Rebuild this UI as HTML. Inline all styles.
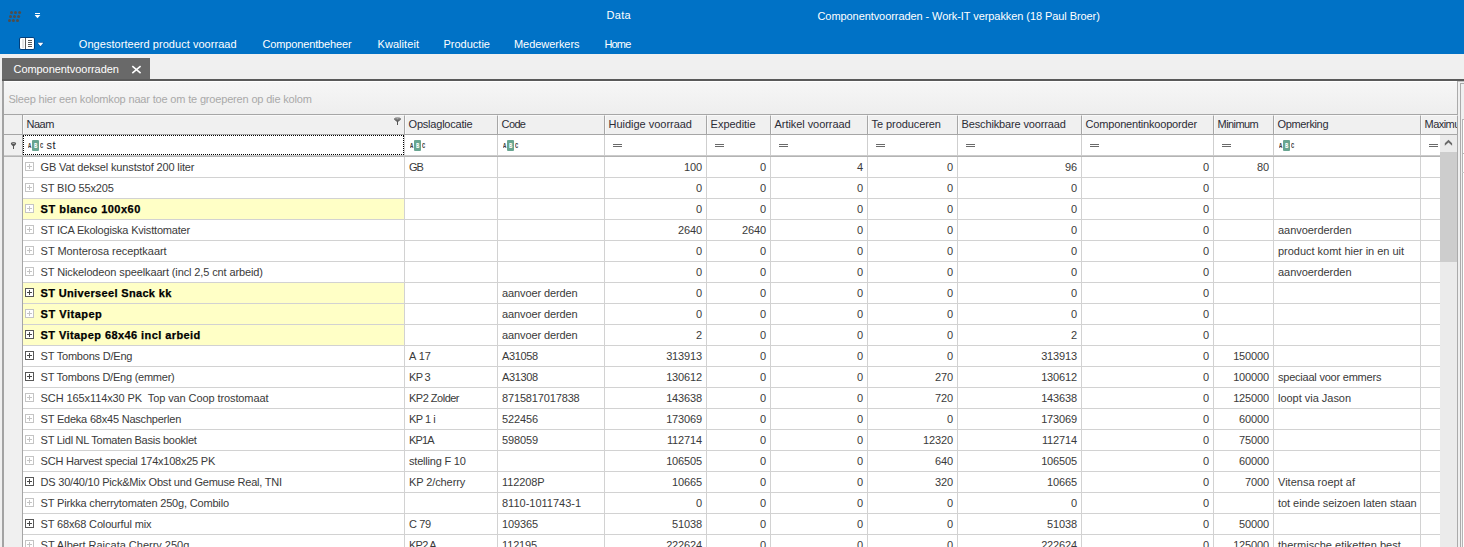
<!DOCTYPE html>
<html lang="nl"><head><meta charset="utf-8"><title>Componentvoorraden - Work-IT verpakken</title>
<style>
*{box-sizing:border-box;margin:0;padding:0}
html,body{width:1464px;height:547px;overflow:hidden}
body{position:relative;background:#f0f0f0;font-family:"Liberation Sans",Arial,sans-serif;font-size:11px;line-height:13px;color:#3a3a3a;letter-spacing:-0.14px}
.abs{position:absolute}
#bar{position:absolute;left:0;top:0;width:1464px;height:54px;background:#0072c6}
.wt{position:absolute;color:#fff;white-space:pre;height:13px}
#tab{position:absolute;left:2px;top:58px;width:148px;height:22px;background:#696969}
#tabline{position:absolute;left:2px;top:79px;width:1462px;height:2px;background:#5a5a5a}
#tabline2{position:absolute;left:4px;top:81px;width:1460px;height:1px;background:#c4c4c4}
#panel{position:absolute;left:2px;top:81px;width:1456px;height:470px;border-left:2px solid #a3a3a3;border-right:1px solid #ababab;background:#fff}
#group{position:absolute;left:4px;top:82px;width:1453px;height:32px;background:linear-gradient(#f6f6f6,#eeeeee)}
#gtext{position:absolute;left:8.4px;top:93px;color:#a9a9a9;white-space:pre}
#hdr{position:absolute;left:4px;top:114px;width:1453px;height:21px;background:#f0f0f0;border-top:1px solid #a6a6a6;border-bottom:1px solid #a6a6a6}
.hc{position:absolute;top:115px;height:19px;border-right:1px solid #a6a6a6;border-top:1px solid #f9f9f9;border-left:1px solid #f9f9f9;color:#2c2c36;white-space:pre;overflow:hidden;padding:2px 0 0 2.6px}
#ind{position:absolute;left:4px;top:135px;width:18px;height:420px;background:#f0f0f0}
#indb{position:absolute;left:22px;top:115px;width:1px;height:440px;background:#a6a6a6}
#frow{position:absolute;left:23px;top:135px;width:1417px;height:21px;background:#fff}
#fline{position:absolute;left:4px;top:155px;width:1436px;height:2px;background:linear-gradient(#d6d6d6,#a8a8a8)}
.fc{position:absolute;top:135px;height:20px;border-right:1px solid #cfcfcf}
.row{position:absolute;left:23px;width:1417px;height:21px;border-bottom:1px solid #d2d2d2;background:#fff}
.c{position:absolute;top:0;height:20px;border-right:1px solid #d2d2d2;white-space:pre;overflow:hidden;padding-top:4px}
.l{padding-left:4px}
.r{text-align:right;padding-right:4px}
.y{background:#ffffc6;font-weight:bold;color:#000;letter-spacing:-0.05px;-webkit-text-stroke:.25px #000}
.ex{position:absolute;left:2px;top:5px;width:9px;height:9px;border:1px solid #c4c4c4;background:#fff}
.ex:before{content:"";position:absolute;left:1px;top:3px;width:5px;height:1px;background:#c4c4c4}
.ex:after{content:"";position:absolute;left:3px;top:1px;width:1px;height:5px;background:#c4c4c4}
.ex.d{border-color:#585858}
.ex.d:before,.ex.d:after{background:#484848}
.nm{padding-left:17.6px}
.eq{position:absolute;top:9px;width:9px;height:3px;border-top:1px solid #6a6a6a;border-bottom:1px solid #6a6a6a}
.abc{position:absolute;top:5px;height:11px;width:16px}
.abc i{position:absolute;top:3px;font-style:normal;font-family:"Liberation Mono",monospace;font-weight:bold;font-size:7px;line-height:7px;letter-spacing:0;color:#3c3c3c;transform:scaleX(.78);transform-origin:0 0}
.abc b{position:absolute;left:4px;top:0;width:7px;height:11px;background:#68a591;border-radius:1px}
.abc b i{left:2px;color:#fff}
#sb{position:absolute;left:1440px;top:135px;width:17px;height:420px;background:#ebebeb}
#sbth{position:absolute;left:1440px;top:152px;width:17px;height:110px;background:#cdcdcd}
</style></head>
<body>
<div id="bar"></div>
<svg class="abs" style="left:0;top:0" width="60" height="54" viewBox="0 0 60 54"><g fill="#514d4a"><circle cx="11.5" cy="12.5" r="1.5"/><circle cx="15.5" cy="12.5" r="1.5"/><circle cx="19.6" cy="12.5" r="1.5"/><circle cx="10.5" cy="16.5" r="1.5"/><circle cx="14.5" cy="16.5" r="1.5"/><circle cx="18.6" cy="16.5" r="1.5"/><circle cx="9.5" cy="20.6" r="1.5"/><circle cx="13.4" cy="20.6" r="1.5"/><circle cx="17.5" cy="20.6" r="1.5"/></g><rect x="35" y="13" width="5" height="1" fill="#fff"/><path d="M34.6 15h5.8L37.5 18.2z" fill="#fff"/><rect x="19.5" y="37.5" width="15" height="12" rx="1.5" fill="#fff" stroke="#003f7d" stroke-width="1"/><rect x="22" y="39" width="2" height="9" fill="#e6e6e6"/><rect x="25" y="38" width="1" height="11" fill="#5a5a5a"/><g fill="#5a5a5a"><rect x="28" y="40" width="4" height="1"/><rect x="28" y="42" width="4" height="1"/><rect x="28" y="44" width="4" height="1"/><rect x="28" y="46" width="4" height="1"/></g><path d="M36.6 42h7.8L40.5 47.4z" fill="#0059ab"/><path d="M37.7 42.7h5.6L40.5 46.3z" fill="#fff"/></svg>
<div class="wt" style="left:606.5px;top:9px"><span style="letter-spacing:0.3px">Data</span></div>
<div class="wt" style="left:817.5px;top:10px"><span style="letter-spacing:-0.075px">Componentvoorraden - Work-IT verpakken (18 Paul Broer)</span></div>
<div class="wt" style="left:78.8px;top:38px"><span style="letter-spacing:0.045px">Ongestorteerd product voorraad</span></div>
<div class="wt" style="left:262.5px;top:38px"><span style="letter-spacing:-0.143px">Componentbeheer</span></div>
<div class="wt" style="left:377.5px;top:38px"><span style="letter-spacing:0.062px">Kwaliteit</span></div>
<div class="wt" style="left:443.5px;top:38px"><span style="letter-spacing:0.0px">Productie</span></div>
<div class="wt" style="left:514px;top:38px"><span style="letter-spacing:-0.05px">Medewerkers</span></div>
<div class="wt" style="left:604.5px;top:38px"><span style="letter-spacing:-0.85px">Home</span></div>
<div id="tab"></div><div id="tabline"></div><div id="tabline2"></div>
<div class="wt" style="left:13.5px;top:63px"><span style="letter-spacing:-0.059px">Componentvoorraden</span></div>
<svg class="abs" style="left:130px;top:64px" width="13" height="12" viewBox="0 0 13 12"><path d="M2.3 2.1l8.3 7M10.6 2.1l-8.3 7" stroke="#fff" stroke-width="1.6" fill="none"/></svg>
<div id="panel"></div><div id="group"></div><div id="gtext"><span style="letter-spacing:-0.17px">Sleep hier een kolomkop naar toe om te groeperen op die kolom</span></div>
<div id="hdr"></div><div id="ind"></div><div id="indb"></div>
<div class="hc" style="left:23px;width:382px"><span style="letter-spacing:-0.533px">Naam</span></div>
<div class="hc" style="left:405px;width:93px"><span style="letter-spacing:-0.217px">Opslaglocatie</span></div>
<div class="hc" style="left:498px;width:107px"><span style="letter-spacing:-0.633px">Code</span></div>
<div class="hc" style="left:605px;width:102px"><span style="letter-spacing:-0.027px">Huidige voorraad</span></div>
<div class="hc" style="left:707px;width:64px"><span style="letter-spacing:-0.025px">Expeditie</span></div>
<div class="hc" style="left:771px;width:97px"><span style="letter-spacing:-0.067px">Artikel voorraad</span></div>
<div class="hc" style="left:868px;width:90px"><span style="letter-spacing:-0.083px">Te produceren</span></div>
<div class="hc" style="left:958px;width:124px"><span style="letter-spacing:-0.142px">Beschikbare voorraad</span></div>
<div class="hc" style="left:1082px;width:132px"><span style="letter-spacing:-0.184px">Componentinkooporder</span></div>
<div class="hc" style="left:1214px;width:60px"><span style="letter-spacing:-0.583px">Minimum</span></div>
<div class="hc" style="left:1274px;width:147px"><span style="letter-spacing:-0.362px">Opmerking</span></div>
<div class="hc" style="left:1421px;width:37px"><span style="letter-spacing:-0.55px">Maximum</span></div>
<svg class="abs" style="left:393px;top:117px" width="9" height="9" viewBox="0 0 9 9"><ellipse cx="4.5" cy="2" rx="3.2" ry="1" fill="#e4e4e4" stroke="#555" stroke-width="1"/><path d="M1.3 2.4L4 5h1L7.7 2.4z" fill="#666"/><rect x="4" y="4" width="1" height="4" fill="#555"/></svg>
<div id="frow"></div>
<div class="fc" style="left:23px;width:382px"><span class="abc" style="left:5px"><i style="left:0">A</i><b><i>B</i></b><i style="left:12px">C</i></span><span class="abs" style="left:23.6px;top:4px;color:#1e1e2c;white-space:pre;letter-spacing:.3px">st</span></div>
<div class="fc" style="left:405px;width:93px"><span class="abc" style="left:5px"><i style="left:0">A</i><b><i>B</i></b><i style="left:12px">C</i></span></div>
<div class="fc" style="left:498px;width:107px"><span class="abc" style="left:5px"><i style="left:0">A</i><b><i>B</i></b><i style="left:12px">C</i></span></div>
<div class="fc" style="left:605px;width:102px"><span class="eq" style="left:8px"></span></div>
<div class="fc" style="left:707px;width:64px"><span class="eq" style="left:8px"></span></div>
<div class="fc" style="left:771px;width:97px"><span class="eq" style="left:8px"></span></div>
<div class="fc" style="left:868px;width:90px"><span class="eq" style="left:8px"></span></div>
<div class="fc" style="left:958px;width:124px"><span class="eq" style="left:8px"></span></div>
<div class="fc" style="left:1082px;width:132px"><span class="eq" style="left:8px"></span></div>
<div class="fc" style="left:1214px;width:60px"><span class="eq" style="left:8px"></span></div>
<div class="fc" style="left:1274px;width:147px"><span class="abc" style="left:5px"><i style="left:0">A</i><b><i>B</i></b><i style="left:12px">C</i></span></div>
<div class="fc" style="left:1421px;width:36px"><span class="eq" style="left:8px"></span></div>
<div class="abs" style="left:23px;top:135px;width:381px;height:20px;border:1px dotted #000"></div>
<div id="fline"></div>
<svg class="abs" style="left:10px;top:141px" width="7" height="9" viewBox="0 0 7 9"><ellipse cx="3.5" cy="2.6" rx="2.7" ry="1.7" fill="#565656"/><ellipse cx="3.5" cy="2.2" rx="1.3" ry=".55" fill="#c8c8c8"/><path d="M1.2 3.4L3 5.2h1L5.8 3.4z" fill="#565656"/><rect x="3" y="4" width="1" height="4" fill="#555"/></svg>
<div class="row" style="top:157px">
<div class="c nm" style="left:0;width:382px"><span class="ex"></span><span style="letter-spacing:-0.153px">GB Vat deksel kunststof 200 liter</span></div>
<div class="c l" style="left:382px;width:93px"><span style="letter-spacing:-1.0px">GB</span></div>
<div class="c l" style="left:475px;width:107px"></div>
<div class="c r" style="left:582px;width:102px">100</div>
<div class="c r" style="left:684px;width:64px">0</div>
<div class="c r" style="left:748px;width:97px">4</div>
<div class="c r" style="left:845px;width:90px">0</div>
<div class="c r" style="left:935px;width:124px">96</div>
<div class="c r" style="left:1059px;width:132px">0</div>
<div class="c r" style="left:1191px;width:60px">80</div>
<div class="c l" style="left:1251px;width:147px"></div>
<div class="c r" style="left:1398px;width:36px"></div>
</div>
<div class="row" style="top:178px">
<div class="c nm" style="left:0;width:382px"><span class="ex"></span><span style="letter-spacing:-0.15px">ST BIO 55x205</span></div>
<div class="c l" style="left:382px;width:93px"></div>
<div class="c l" style="left:475px;width:107px"></div>
<div class="c r" style="left:582px;width:102px">0</div>
<div class="c r" style="left:684px;width:64px">0</div>
<div class="c r" style="left:748px;width:97px">0</div>
<div class="c r" style="left:845px;width:90px">0</div>
<div class="c r" style="left:935px;width:124px">0</div>
<div class="c r" style="left:1059px;width:132px">0</div>
<div class="c r" style="left:1191px;width:60px"></div>
<div class="c l" style="left:1251px;width:147px"></div>
<div class="c r" style="left:1398px;width:36px"></div>
</div>
<div class="row" style="top:199px">
<div class="c nm y" style="left:0;width:382px"><span class="ex"></span><span style="letter-spacing:0.493px">ST blanco 100x60</span></div>
<div class="c l" style="left:382px;width:93px"></div>
<div class="c l" style="left:475px;width:107px"></div>
<div class="c r" style="left:582px;width:102px">0</div>
<div class="c r" style="left:684px;width:64px">0</div>
<div class="c r" style="left:748px;width:97px">0</div>
<div class="c r" style="left:845px;width:90px">0</div>
<div class="c r" style="left:935px;width:124px">0</div>
<div class="c r" style="left:1059px;width:132px">0</div>
<div class="c r" style="left:1191px;width:60px"></div>
<div class="c l" style="left:1251px;width:147px"></div>
<div class="c r" style="left:1398px;width:36px"></div>
</div>
<div class="row" style="top:220px">
<div class="c nm" style="left:0;width:382px"><span class="ex"></span><span style="letter-spacing:-0.19px">ST ICA Ekologiska Kvisttomater</span></div>
<div class="c l" style="left:382px;width:93px"></div>
<div class="c l" style="left:475px;width:107px"></div>
<div class="c r" style="left:582px;width:102px">2640</div>
<div class="c r" style="left:684px;width:64px">2640</div>
<div class="c r" style="left:748px;width:97px">0</div>
<div class="c r" style="left:845px;width:90px">0</div>
<div class="c r" style="left:935px;width:124px">0</div>
<div class="c r" style="left:1059px;width:132px">0</div>
<div class="c r" style="left:1191px;width:60px"></div>
<div class="c l" style="left:1251px;width:147px"><span style="letter-spacing:-0.042px">aanvoerderden</span></div>
<div class="c r" style="left:1398px;width:36px"></div>
</div>
<div class="row" style="top:241px">
<div class="c nm" style="left:0;width:382px"><span class="ex"></span><span style="letter-spacing:-0.039px">ST Monterosa receptkaart</span></div>
<div class="c l" style="left:382px;width:93px"></div>
<div class="c l" style="left:475px;width:107px"></div>
<div class="c r" style="left:582px;width:102px">0</div>
<div class="c r" style="left:684px;width:64px">0</div>
<div class="c r" style="left:748px;width:97px">0</div>
<div class="c r" style="left:845px;width:90px">0</div>
<div class="c r" style="left:935px;width:124px">0</div>
<div class="c r" style="left:1059px;width:132px">0</div>
<div class="c r" style="left:1191px;width:60px"></div>
<div class="c l" style="left:1251px;width:147px"><span style="letter-spacing:-0.019px">product komt hier in en uit</span></div>
<div class="c r" style="left:1398px;width:36px"></div>
</div>
<div class="row" style="top:262px">
<div class="c nm" style="left:0;width:382px"><span class="ex"></span><span style="letter-spacing:-0.12px">ST Nickelodeon speelkaart (incl 2,5 cnt arbeid)</span></div>
<div class="c l" style="left:382px;width:93px"></div>
<div class="c l" style="left:475px;width:107px"></div>
<div class="c r" style="left:582px;width:102px">0</div>
<div class="c r" style="left:684px;width:64px">0</div>
<div class="c r" style="left:748px;width:97px">0</div>
<div class="c r" style="left:845px;width:90px">0</div>
<div class="c r" style="left:935px;width:124px">0</div>
<div class="c r" style="left:1059px;width:132px">0</div>
<div class="c r" style="left:1191px;width:60px"></div>
<div class="c l" style="left:1251px;width:147px"><span style="letter-spacing:-0.042px">aanvoerderden</span></div>
<div class="c r" style="left:1398px;width:36px"></div>
</div>
<div class="row" style="top:283px">
<div class="c nm y" style="left:0;width:382px"><span class="ex d"></span><span style="letter-spacing:0.343px">ST Universeel Snack kk</span></div>
<div class="c l" style="left:382px;width:93px"></div>
<div class="c l" style="left:475px;width:107px"><span style="letter-spacing:-0.115px">aanvoer derden</span></div>
<div class="c r" style="left:582px;width:102px">0</div>
<div class="c r" style="left:684px;width:64px">0</div>
<div class="c r" style="left:748px;width:97px">0</div>
<div class="c r" style="left:845px;width:90px">0</div>
<div class="c r" style="left:935px;width:124px">0</div>
<div class="c r" style="left:1059px;width:132px">0</div>
<div class="c r" style="left:1191px;width:60px"></div>
<div class="c l" style="left:1251px;width:147px"></div>
<div class="c r" style="left:1398px;width:36px"></div>
</div>
<div class="row" style="top:304px">
<div class="c nm y" style="left:0;width:382px"><span class="ex"></span><span style="letter-spacing:0.511px">ST Vitapep</span></div>
<div class="c l" style="left:382px;width:93px"></div>
<div class="c l" style="left:475px;width:107px"><span style="letter-spacing:-0.115px">aanvoer derden</span></div>
<div class="c r" style="left:582px;width:102px">0</div>
<div class="c r" style="left:684px;width:64px">0</div>
<div class="c r" style="left:748px;width:97px">0</div>
<div class="c r" style="left:845px;width:90px">0</div>
<div class="c r" style="left:935px;width:124px">0</div>
<div class="c r" style="left:1059px;width:132px">0</div>
<div class="c r" style="left:1191px;width:60px"></div>
<div class="c l" style="left:1251px;width:147px"></div>
<div class="c r" style="left:1398px;width:36px"></div>
</div>
<div class="row" style="top:325px">
<div class="c nm y" style="left:0;width:382px"><span class="ex d"></span><span style="letter-spacing:0.419px">ST Vitapep 68x46 incl arbeid</span></div>
<div class="c l" style="left:382px;width:93px"></div>
<div class="c l" style="left:475px;width:107px"><span style="letter-spacing:-0.115px">aanvoer derden</span></div>
<div class="c r" style="left:582px;width:102px">2</div>
<div class="c r" style="left:684px;width:64px">0</div>
<div class="c r" style="left:748px;width:97px">0</div>
<div class="c r" style="left:845px;width:90px">0</div>
<div class="c r" style="left:935px;width:124px">2</div>
<div class="c r" style="left:1059px;width:132px">0</div>
<div class="c r" style="left:1191px;width:60px"></div>
<div class="c l" style="left:1251px;width:147px"></div>
<div class="c r" style="left:1398px;width:36px"></div>
</div>
<div class="row" style="top:346px">
<div class="c nm" style="left:0;width:382px"><span class="ex d"></span><span style="letter-spacing:-0.207px">ST Tombons D/Eng</span></div>
<div class="c l" style="left:382px;width:93px"><span style="letter-spacing:-0.067px">A 17</span></div>
<div class="c l" style="left:475px;width:107px"><span style="letter-spacing:-0.36px">A31058</span></div>
<div class="c r" style="left:582px;width:102px">313913</div>
<div class="c r" style="left:684px;width:64px">0</div>
<div class="c r" style="left:748px;width:97px">0</div>
<div class="c r" style="left:845px;width:90px">0</div>
<div class="c r" style="left:935px;width:124px">313913</div>
<div class="c r" style="left:1059px;width:132px">0</div>
<div class="c r" style="left:1191px;width:60px">150000</div>
<div class="c l" style="left:1251px;width:147px"></div>
<div class="c r" style="left:1398px;width:36px"></div>
</div>
<div class="row" style="top:367px">
<div class="c nm" style="left:0;width:382px"><span class="ex d"></span><span style="letter-spacing:-0.235px">ST Tombons D/Eng (emmer)</span></div>
<div class="c l" style="left:382px;width:93px"><span style="letter-spacing:-0.667px">KP 3</span></div>
<div class="c l" style="left:475px;width:107px"><span style="letter-spacing:-0.36px">A31308</span></div>
<div class="c r" style="left:582px;width:102px">130612</div>
<div class="c r" style="left:684px;width:64px">0</div>
<div class="c r" style="left:748px;width:97px">0</div>
<div class="c r" style="left:845px;width:90px">270</div>
<div class="c r" style="left:935px;width:124px">130612</div>
<div class="c r" style="left:1059px;width:132px">0</div>
<div class="c r" style="left:1191px;width:60px">100000</div>
<div class="c l" style="left:1251px;width:147px"><span style="letter-spacing:-0.221px">speciaal voor emmers</span></div>
<div class="c r" style="left:1398px;width:36px"></div>
</div>
<div class="row" style="top:388px">
<div class="c nm" style="left:0;width:382px"><span class="ex"></span><span style="letter-spacing:-0.098px">SCH 165x114x30 PK  Top van Coop trostomaat</span></div>
<div class="c l" style="left:382px;width:93px"><span style="letter-spacing:-0.5px">KP2 Zolder</span></div>
<div class="c l" style="left:475px;width:107px"><span style="letter-spacing:-0.15px">8715817017838</span></div>
<div class="c r" style="left:582px;width:102px">143638</div>
<div class="c r" style="left:684px;width:64px">0</div>
<div class="c r" style="left:748px;width:97px">0</div>
<div class="c r" style="left:845px;width:90px">720</div>
<div class="c r" style="left:935px;width:124px">143638</div>
<div class="c r" style="left:1059px;width:132px">0</div>
<div class="c r" style="left:1191px;width:60px">125000</div>
<div class="c l" style="left:1251px;width:147px"><span style="letter-spacing:-0.021px">loopt via Jason</span></div>
<div class="c r" style="left:1398px;width:36px"></div>
</div>
<div class="row" style="top:409px">
<div class="c nm" style="left:0;width:382px"><span class="ex"></span><span style="letter-spacing:-0.208px">ST Edeka 68x45 Naschperlen</span></div>
<div class="c l" style="left:382px;width:93px"><span style="letter-spacing:-0.5px">KP 1 i</span></div>
<div class="c l" style="left:475px;width:107px">522456</div>
<div class="c r" style="left:582px;width:102px">173069</div>
<div class="c r" style="left:684px;width:64px">0</div>
<div class="c r" style="left:748px;width:97px">0</div>
<div class="c r" style="left:845px;width:90px">0</div>
<div class="c r" style="left:935px;width:124px">173069</div>
<div class="c r" style="left:1059px;width:132px">0</div>
<div class="c r" style="left:1191px;width:60px">60000</div>
<div class="c l" style="left:1251px;width:147px"></div>
<div class="c r" style="left:1398px;width:36px"></div>
</div>
<div class="row" style="top:430px">
<div class="c nm" style="left:0;width:382px"><span class="ex"></span><span style="letter-spacing:-0.258px">ST Lidl NL Tomaten Basis booklet</span></div>
<div class="c l" style="left:382px;width:93px"><span style="letter-spacing:-0.867px">KP1A</span></div>
<div class="c l" style="left:475px;width:107px">598059</div>
<div class="c r" style="left:582px;width:102px">112714</div>
<div class="c r" style="left:684px;width:64px">0</div>
<div class="c r" style="left:748px;width:97px">0</div>
<div class="c r" style="left:845px;width:90px">12320</div>
<div class="c r" style="left:935px;width:124px">112714</div>
<div class="c r" style="left:1059px;width:132px">0</div>
<div class="c r" style="left:1191px;width:60px">75000</div>
<div class="c l" style="left:1251px;width:147px"></div>
<div class="c r" style="left:1398px;width:36px"></div>
</div>
<div class="row" style="top:451px">
<div class="c nm" style="left:0;width:382px"><span class="ex"></span><span style="letter-spacing:-0.237px">SCH Harvest special 174x108x25 PK</span></div>
<div class="c l" style="left:382px;width:93px"><span style="letter-spacing:-0.208px">stelling F 10</span></div>
<div class="c l" style="left:475px;width:107px"></div>
<div class="c r" style="left:582px;width:102px">106505</div>
<div class="c r" style="left:684px;width:64px">0</div>
<div class="c r" style="left:748px;width:97px">0</div>
<div class="c r" style="left:845px;width:90px">640</div>
<div class="c r" style="left:935px;width:124px">106505</div>
<div class="c r" style="left:1059px;width:132px">0</div>
<div class="c r" style="left:1191px;width:60px">60000</div>
<div class="c l" style="left:1251px;width:147px"></div>
<div class="c r" style="left:1398px;width:36px"></div>
</div>
<div class="row" style="top:472px">
<div class="c nm" style="left:0;width:382px"><span class="ex d"></span><span style="letter-spacing:-0.213px">DS 30/40/10 Pick&amp;Mix Obst und Gemuse Real, TNI</span></div>
<div class="c l" style="left:382px;width:93px"><span style="letter-spacing:-0.1px">KP 2/cherry</span></div>
<div class="c l" style="left:475px;width:107px"><span style="letter-spacing:-0.1px">112208P</span></div>
<div class="c r" style="left:582px;width:102px">10665</div>
<div class="c r" style="left:684px;width:64px">0</div>
<div class="c r" style="left:748px;width:97px">0</div>
<div class="c r" style="left:845px;width:90px">320</div>
<div class="c r" style="left:935px;width:124px">10665</div>
<div class="c r" style="left:1059px;width:132px">0</div>
<div class="c r" style="left:1191px;width:60px">7000</div>
<div class="c l" style="left:1251px;width:147px"><span style="letter-spacing:0.007px">Vitensa roept af</span></div>
<div class="c r" style="left:1398px;width:36px"></div>
</div>
<div class="row" style="top:493px">
<div class="c nm" style="left:0;width:382px"><span class="ex"></span><span style="letter-spacing:-0.178px">ST Pirkka cherrytomaten 250g, Combilo</span></div>
<div class="c l" style="left:382px;width:93px"></div>
<div class="c l" style="left:475px;width:107px"><span style="letter-spacing:0.0px">8110-1011743-1</span></div>
<div class="c r" style="left:582px;width:102px">0</div>
<div class="c r" style="left:684px;width:64px">0</div>
<div class="c r" style="left:748px;width:97px">0</div>
<div class="c r" style="left:845px;width:90px">0</div>
<div class="c r" style="left:935px;width:124px">0</div>
<div class="c r" style="left:1059px;width:132px">0</div>
<div class="c r" style="left:1191px;width:60px"></div>
<div class="c l" style="left:1251px;width:147px"><span style="letter-spacing:-0.05px">tot einde seizoen laten staan</span></div>
<div class="c r" style="left:1398px;width:36px"></div>
</div>
<div class="row" style="top:514px">
<div class="c nm" style="left:0;width:382px"><span class="ex d"></span><span style="letter-spacing:-0.157px">ST 68x68 Colourful mix</span></div>
<div class="c l" style="left:382px;width:93px"><span style="letter-spacing:-0.4px">C 79</span></div>
<div class="c l" style="left:475px;width:107px">109365</div>
<div class="c r" style="left:582px;width:102px">51038</div>
<div class="c r" style="left:684px;width:64px">0</div>
<div class="c r" style="left:748px;width:97px">0</div>
<div class="c r" style="left:845px;width:90px">0</div>
<div class="c r" style="left:935px;width:124px">51038</div>
<div class="c r" style="left:1059px;width:132px">0</div>
<div class="c r" style="left:1191px;width:60px">50000</div>
<div class="c l" style="left:1251px;width:147px"></div>
<div class="c r" style="left:1398px;width:36px"></div>
</div>
<div class="row" style="top:535px">
<div class="c nm" style="left:0;width:382px"><span class="ex"></span><span style="letter-spacing:-0.011px">ST Albert Raicata Cherry 250g</span></div>
<div class="c l" style="left:382px;width:93px"><span style="letter-spacing:-0.75px">KP2 A</span></div>
<div class="c l" style="left:475px;width:107px">112195</div>
<div class="c r" style="left:582px;width:102px">222624</div>
<div class="c r" style="left:684px;width:64px">0</div>
<div class="c r" style="left:748px;width:97px">0</div>
<div class="c r" style="left:845px;width:90px">0</div>
<div class="c r" style="left:935px;width:124px">222624</div>
<div class="c r" style="left:1059px;width:132px">0</div>
<div class="c r" style="left:1191px;width:60px">125000</div>
<div class="c l" style="left:1251px;width:147px"><span style="letter-spacing:0.021px">thermische etiketten best</span></div>
<div class="c r" style="left:1398px;width:36px"></div>
</div>
<div id="sb"></div><div id="sbth"></div>
<svg class="abs" style="left:1440px;top:135px" width="17" height="17" viewBox="0 0 17 17"><rect width="17" height="17" fill="#ebebeb"/><path d="M4.8 8.15L8.5 4.85L12.1 8.15V10.7L8.5 7.6L4.8 10.7z" fill="#6a6a6a"/></svg>
<div class="abs" style="left:1460px;top:83px;width:6px;height:470px;border:1px solid #ababab;background:#f0f0f0"></div>
<div class="abs" style="left:1462px;top:119px;width:4px;height:440px;border:1px solid #b5b5b5;background:#fff"></div>
<div class="abs" style="left:1462px;top:153px;width:2px;height:1px;background:#b5b5b5"></div><div class="abs" style="left:1462px;top:172px;width:2px;height:1px;background:#c8c8c8"></div>
</body></html>
